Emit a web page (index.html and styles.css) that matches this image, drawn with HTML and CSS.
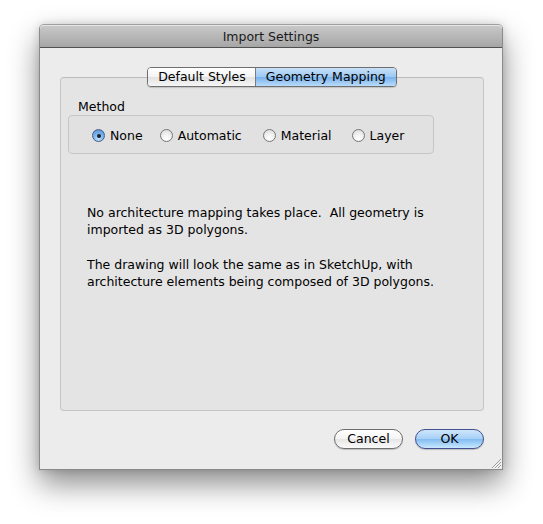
FILE: index.html
```html
<!DOCTYPE html>
<html>
<head>
<meta charset="utf-8">
<link rel="stylesheet" href="styles.css">
</head>
<body>
<div class="window">
  <div class="titlebar">Import Settings</div>
  <div class="content">
    <div class="tabs">
      <div class="tab">Default Styles</div>
      <div class="tab active">Geometry Mapping</div>
    </div>
    <div class="panel">
      <div class="group-label">Method</div>
      <div class="group">
        <label class="radio"><span class="dot checked"></span>None</label>
        <label class="radio"><span class="dot"></span>Automatic</label>
        <label class="radio"><span class="dot"></span>Material</label>
        <label class="radio"><span class="dot"></span>Layer</label>
      </div>
      <div class="desc">
        <p>No architecture mapping takes place.&nbsp; All geometry is<br>imported as 3D polygons.</p>
        <p>The drawing will look the same as in SketchUp, with<br>architecture elements being composed of 3D polygons.</p>
      </div>
    </div>
    <div class="buttons">
      <div class="btn">Cancel</div>
      <div class="btn default">OK</div>
    </div>
    <div class="grip">
      <svg width="12" height="12" viewBox="0 0 12 12">
        <path d="M11 2 L2 11 M11 5 L5 11 M11 8 L8 11" stroke="#9a9a9a" stroke-width="1" fill="none"/>
        <path d="M11.5 3 L3 11.5 M11.5 6 L6 11.5 M11.5 9 L9 11.5" stroke="#ffffff" stroke-width="0.8" fill="none"/>
      </svg>
    </div>
  </div>
</div>
</body>
</html>
```
FILE: styles.css
```css
html, body {
  margin: 0;
  padding: 0;
  background: #ffffff;
}
body {
  font-family: "DejaVu Sans", "Lucida Grande", sans-serif;
  font-size: 12.5px;
  color: #000;
  padding: 24px 0 0 39px;
  height: 524px;
  box-sizing: border-box;
}
.window {
  width: 464px;
  height: 446px;
  box-sizing: border-box;
  border: 1px solid #8a8a8a;
  border-top-color: #a0a0a0;
  border-radius: 5px 5px 0 0;
  background: #ececec;
  display: flex;
  flex-direction: column;
  box-shadow: 0 14px 30px rgba(0,0,0,0.45), 0 0 8px rgba(0,0,0,0.15);
}
.titlebar {
  height: 22px;
  line-height: 23px;
  text-align: center;
  font-size: 12.5px;
  color: #1a1a1a;
  background: linear-gradient(#c9c9c9, #a6a6a6);
  border-bottom: 1px solid #515151;
  border-radius: 4px 4px 0 0;
  box-shadow: inset 0 1px 0 #e6e6e6;
}
.content {
  flex: 1;
  display: flex;
  flex-direction: column;
  padding: 19px 18px 0 20px;
  position: relative;
}
.tabs {
  display: flex;
  align-self: center;
  position: relative;
  z-index: 1;
  height: 20px;
  box-sizing: border-box;
  border: 1px solid #6f6f6f;
  border-radius: 4px;
  overflow: hidden;
  box-shadow: 0 1px 1px rgba(0,0,0,0.15);
}
.tab {
  padding: 0 9px 0 10px;
  line-height: 18px;
  background: linear-gradient(#ffffff 0%, #f3f3f3 50%, #e2e2e2 51%, #f6f6f6 100%);
}
.tab + .tab {
  border-left: 1px solid #7b7b7b;
}
.tab.active {
  padding: 0 10px 0 10px;
  background: linear-gradient(#c7e0f8 0%, #9cc8f3 50%, #79b1ec 51%, #b9dcfb 100%);
}
.panel {
  margin-top: -10px;
  height: 334px;
  box-sizing: border-box;
  border: 1px solid #c5c5c5;
  border-top-color: #bcbcbc;
  border-radius: 4px;
  background: #e4e4e4;
  padding: 21px 0 0 7px;
  display: flex;
  flex-direction: column;
}
.group-label {
  margin-left: 10px;
  line-height: 16px;
  height: 16px;
}
.group {
  width: 366px;
  height: 39px;
  box-sizing: border-box;
  border: 1px solid #c6c6c6;
  border-radius: 4px;
  background: #e1e1e1;
  display: flex;
  align-items: center;
  padding-left: 23px;
  padding-top: 2px;
}
.radio {
  display: flex;
  align-items: center;
}
.radio:nth-child(1) { margin-right: 17px; }
.radio:nth-child(2) { margin-right: 21px; }
.radio:nth-child(3) { margin-right: 20px; }
.dot {
  width: 13px;
  height: 13px;
  box-sizing: border-box;
  border-radius: 50%;
  border: 1px solid #777;
  background: radial-gradient(circle at 50% 75%, #ffffff 0%, #f2f2f2 40%, #d6d6d6 100%);
  margin-right: 5px;
  position: relative;
}
.dot.checked {
  border-color: #4a5e86;
  background: radial-gradient(circle at 50% 80%, #c2e3ff 0%, #7fb6ec 45%, #4a8ad6 100%);
}
.dot.checked::after {
  content: "";
  position: absolute;
  left: 3.5px;
  top: 3.5px;
  width: 4px;
  height: 4px;
  border-radius: 50%;
  background: #142030;
}
.desc {
  margin: 50px 0 0 19px;
  line-height: 17px;
}
.desc p {
  margin: 0 0 18px 0;
}
.buttons {
  display: flex;
  justify-content: flex-end;
  gap: 12px;
  margin-top: 18px;
}
.btn {
  width: 69px;
  height: 20px;
  box-sizing: border-box;
  border: 1px solid #6e6e6e;
  border-radius: 10px;
  text-align: center;
  line-height: 18px;
  background: linear-gradient(#ffffff 0%, #f4f4f4 50%, #e6e6e6 51%, #fafafa 100%);
  box-shadow: 0 1px 1px rgba(0,0,0,0.2);
}
.btn.default {
  border-color: #44508f;
  background: linear-gradient(#cfe6fb 0%, #a4cff6 50%, #81bbf0 51%, #c9e9ff 100%);
}
.grip {
  position: absolute;
  right: 0;
  bottom: 0;
  width: 12px;
  height: 12px;
}
.grip svg { display: block; }
```
